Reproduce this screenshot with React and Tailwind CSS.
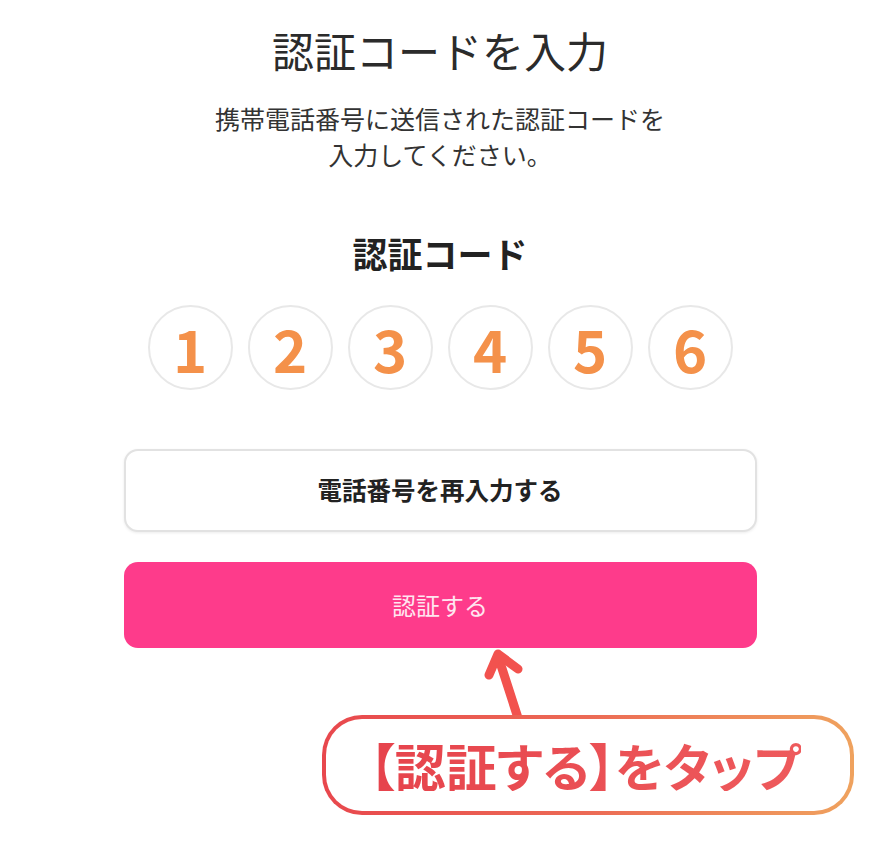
import React from 'react';

const digits = ['1', '2', '3', '4', '5', '6'];

const App = () => {
    return (
        <div className="relative w-[880px] h-[853px] bg-white overflow-hidden font-['Noto_Sans','Noto_Sans_CJK_JP',sans-serif]">
            <div className="flex flex-col items-center">
                {/* Heading */}
                <h1 className="mt-[25px] text-[42px] leading-[50px] font-normal text-[#2b2b2b] font-['Noto_Sans_CJK_JP',sans-serif]">
                    認証コードを入力
                </h1>
                <p className="mt-[25px] text-center text-[25px] leading-[36px] text-[#333] font-['Noto_Sans_CJK_JP',sans-serif]">
                    携帯電話番号に送信された認証コードを
                    <br />
                    入力してください。
                </p>

                {/* Code label */}
                <h2 className="mt-[61px] text-[35px] leading-[40px] font-bold text-[#222] font-['Noto_Sans_CJK_JP',sans-serif]">
                    認証コード
                </h2>

                {/* Code digits */}
                <div className="mt-[32px] flex gap-[15px]">
                    {digits.map((d) => (
                        <div
                            key={d}
                            className="w-[85px] h-[85px] rounded-full border-2 border-[#e8e8e8] flex items-center justify-center"
                        >
                            <span className="text-[58px] leading-none font-bold text-[#f4914a] font-['Noto_Sans_CJK_JP',sans-serif]">{d}</span>
                        </div>
                    ))}
                </div>

                {/* Buttons */}
                <button className="mt-[59px] w-[633px] h-[83px] rounded-[14px] border-2 border-[#e2e2e2] bg-white shadow-[0_1px_3px_rgba(0,0,0,0.08)] flex items-center justify-center">
                    <span className="text-[24.5px] font-bold text-[#222] font-['Noto_Sans_CJK_JP',sans-serif]">電話番号を再入力する</span>
                </button>
                <button className="mt-[30px] w-[633px] h-[86px] rounded-[14px] bg-[#fe3b8b] flex items-center justify-center">
                    <span className="text-[24px] font-normal text-[#ffe6f0] font-['Noto_Sans_CJK_JP',sans-serif]">認証する</span>
                </button>
            </div>

            {/* Annotation arrow */}
            <svg className="absolute left-[470px] top-[640px]" width="70" height="90" viewBox="0 0 70 90">
                <path d="M48 78 L28 16" stroke="#f2524e" strokeWidth="9" strokeLinecap="round" fill="none" />
                <path d="M19 35 L28 14 L48 29" stroke="#f2524e" strokeWidth="9" strokeLinecap="round" strokeLinejoin="round" fill="none" />
            </svg>

            {/* Annotation callout */}
            <div className="absolute left-[322px] top-[715px] w-[532px] h-[100px] rounded-[40px] p-[4px] bg-gradient-to-r from-[#e8474d] via-[#ec6a55] to-[#efa25e]">
                <div className="w-full h-full rounded-[36px] bg-white flex items-center justify-center pr-[6px]">
                    <span className="text-[51px] leading-none font-bold [font-feature-settings:'palt'] bg-gradient-to-r from-[#e6434c] to-[#ee5a5c] bg-clip-text text-transparent font-['Noto_Sans_CJK_JP',sans-serif]">
                        【認証する】をタップ
                    </span>
                </div>
            </div>
        </div>
    );
};

export default App;
